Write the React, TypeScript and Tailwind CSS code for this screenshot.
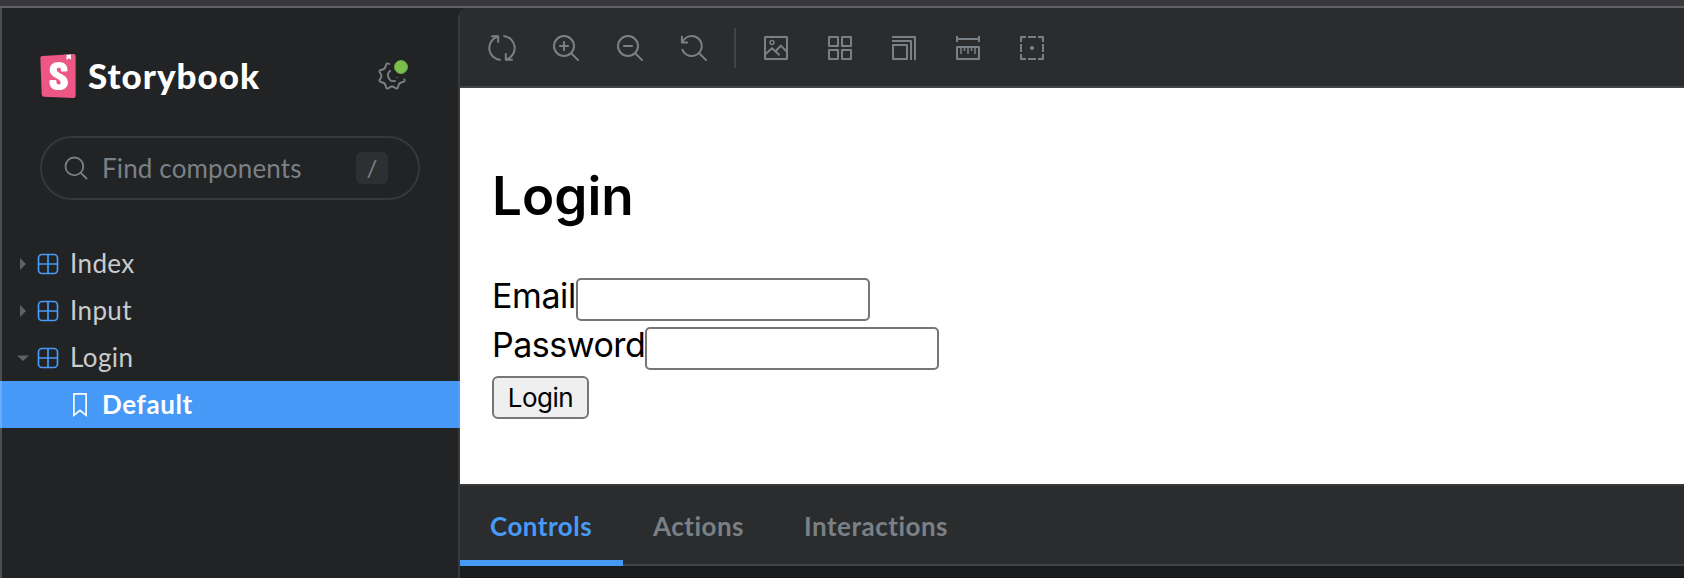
import React from "react";
import { SiStorybook } from "react-icons/si";

const Icon = ({ children }: { children: React.ReactNode }) => (
  <svg
    className="w-7 h-7 shrink-0"
    viewBox="0 0 28 28"
    fill="none"
    stroke="currentColor"
    strokeWidth="2"
    strokeLinejoin="round"
  >
    {children}
  </svg>
);

const Logo = () => (
  <div className="flex items-center">
    <div className="relative w-11 h-11 -ml-1">
      <svg className="absolute inset-0" viewBox="0 0 24 24" fill="#fff">
        <path d="M5 2 16 .4 19.4.2V20H5z" />
      </svg>
      <SiStorybook className="relative w-11 h-11 text-[#ed5685]" />
    </div>
    <div className="ml-2 pb-0.5 font-black text-[35px] leading-none tracking-[1px] text-white">
      Storybook
    </div>
  </div>
);

const Settings = () => (
  <div className="relative w-7 h-7 text-[#798186]">
    <svg
      className="w-7 h-7"
      viewBox="0 0 28 28"
      fill="none"
      stroke="currentColor"
      strokeWidth="1.9"
      strokeLinecap="round"
      strokeLinejoin="round"
    >
      <path d="M11.2 2Q8.3.1 7.8 3.7 7.3 7.3 3.7 7.8.1 8.3 2.3 11.2 4.5 14 2.3 16.9.1 19.7 3.7 20.2 7.3 20.7 7.8 24.3 8.3 27.9 11.2 25.7 14 23.5 16.9 25.7 19.7 27.9 20.2 24.3 20.7 20.7 24.3 20.2 27.4 19.8 26.4 17.4" />
      <path d="M12.2 8.8a5.8 5.8 0 0 0 4.8 10.2" />
      <path d="M19 15.6h.2" strokeWidth="1.4" />
    </svg>
    <span className="absolute -top-[2px] -right-[2px] w-3.5 h-3.5 rounded-full bg-[#7abf4c] border border-[#6aa843]" />
  </div>
);

const Search = () => (
  <div className="mt-[38px] h-16 rounded-full border-2 border-[#373839] flex items-center pl-[22px] pr-[30px] text-[#798186]">
    <svg
      className="w-6 h-6"
      viewBox="0 0 24 24"
      fill="none"
      stroke="currentColor"
      strokeWidth="1.8"
    >
      <circle cx="10.4" cy="10.4" r="8.9" />
      <path d="m16.8 16.8 6.2 6.2" />
    </svg>
    <div className="ml-3.5 text-[26px] tracking-[0.15px]">
      Find components
    </div>
    <div className="ml-auto w-8 h-8 rounded-md bg-[#2e2f31] flex items-center justify-center text-2xl">
      /
    </div>
  </div>
);

const Item = ({ name, open }: { name: string; open?: boolean }) => (
  <div className="h-[47px] flex items-center pl-[13px] text-[#c9cccf]">
    <svg className="w-4 h-4 text-[#5c6365]" viewBox="0 0 16 16" fill="currentColor">
      {open ? <path d="M2 5.5h12L8 11z" /> : <path d="M5 2v12l6-6z" />}
    </svg>
    <svg
      className="w-6 h-6 ml-[5px] text-[#479af7]"
      viewBox="0 0 24 24"
      fill="none"
      stroke="currentColor"
      strokeWidth="1.7"
    >
      <rect x="2.5" y="2.5" width="19" height="19" rx="3.5" />
      <path d="M12 2.5v19M2.5 12h19" />
    </svg>
    <div className="ml-2.5 text-[26px] tracking-[0.4px]">{name}</div>
  </div>
);

const Sidebar = () => (
  <div className="w-[458px] shrink-0 border-l-2 border-[#4d4e50]">
    <div className="pt-[46px] px-[38px]">
      <div className="flex items-center justify-between pr-3.5">
        <Logo />
        <Settings />
      </div>
      <Search />
    </div>
    <div className="mt-10">
      <Item name="Index" />
      <Item name="Input" />
      <Item name="Login" open />
      <div className="relative h-[47px] -mr-0.5 -ml-0.5 border-x-2 border-l-[#68adf8] border-r-[#549ff5] bg-[#4699f6] flex items-center pl-[71px] text-white">
        <svg
          className="w-3.5 h-6"
          viewBox="0 0 14 24"
          fill="none"
          stroke="currentColor"
          strokeWidth="1.6"
        >
          <path d="M.9.9h12.2v21.4L7 17.4.9 22.3z" />
        </svg>
        <div className="ml-[15px] text-[26px] font-bold tracking-[0.6px]">
          Default
        </div>
      </div>
    </div>
  </div>
);

const Toolbar = () => (
  <div className="h-20 shrink-0 border-b-2 border-[#424344] bg-[#2b2c2e] rounded-tl-lg flex items-center pt-0.5 pl-7 gap-9 text-[#798186]">
    <Icon>
      <path d="M3.2 2.2h7v6.6M9.6 2.6A12 12 0 0 0 12.6 26M24.8 25.8h-7v-6.6M18.4 25.4A12 12 0 0 0 15.4 2" />
    </Icon>
    <Icon>
      <circle cx="12" cy="12" r="10" />
      <path d="m19 19 7.6 7.6M12 7.2v9.6M7.2 12h9.6" />
    </Icon>
    <Icon>
      <circle cx="12" cy="12" r="10" />
      <path d="m19 19 7.6 7.6M7.2 12h9.6" />
    </Icon>
    <Icon>
      <path d="M1.9 2v6.4h6M2.4 8.4a10 10 0 1 1-.2 6.6M19 19l7.6 7.6" />
    </Icon>
    <div className="w-0.5 h-10 -mx-2.5 bg-[#424344]" />
    <Icon>
      <rect x="3" y="3" width="22" height="22" rx="0.5" />
      <circle cx="10" cy="8.6" r="2" strokeWidth="1.5" />
      <path d="m3 20.6 7-6.4 7.6 7M13.8 17l5-5.4 6.2 6.2" />
    </Icon>
    <Icon>
      <rect x="3" y="3" width="9" height="9" />
      <rect x="16" y="3" width="9" height="9" />
      <rect x="3" y="16" width="9" height="9" />
      <rect x="16" y="16" width="9" height="9" />
    </Icon>
    <Icon>
      <rect x="3" y="11" width="14" height="14" />
      <path d="M2 7h19v19M2 3h23v23" />
    </Icon>
    <Icon>
      <path d="M3 2v6M25 2v6M3 5h22" />
      <rect x="3" y="13" width="22" height="12" />
      <path d="M7 13v7M14 13v7M21 13v7M10.5 13v4M17.5 13v4" strokeWidth="1.6" />
    </Icon>
    <Icon>
      <path d="M3 8V3h5M10 3h8M20 3h5v5M25 10v8M25 20v5h-5M18 25h-8M8 25H3v-5M3 18v-8" />
      <circle cx="14" cy="14" r="2" fill="currentColor" stroke="none" />
    </Icon>
  </div>
);

const Preview = () => (
  <div className="h-[396px] shrink-0 bg-white pl-8 text-black font-[Inter,'Liberation_Sans',sans-serif]">
    <h1 className="pt-[76px] text-[53px] leading-[64px] font-semibold">
      Login
    </h1>
    <div className="mt-[47px] h-[49px] flex items-start text-[34px] leading-[42px]">
      <label className="w-[84px] tracking-[-0.4px]">Email</label>
      <input className="mt-[3px] w-[294px] h-[43px] border-2 border-[#767676] rounded-[5px]" />
    </div>
    <div className="h-[49px] flex items-start text-[34px] leading-[42px]">
      <label className="w-[153px] tracking-[-0.5px]">Password</label>
      <input className="mt-[3px] w-[294px] h-[43px] border-2 border-[#767676] rounded-[5px]" />
    </div>
    <button className="mt-[3px] w-[97px] h-[43px] pb-px border-2 border-[#767676] rounded-[6px] bg-[#efefef] text-[26px] leading-[37px] tracking-[-0.5px]">
      Login
    </button>
  </div>
);

const Addons = () => (
  <div className="grow border-t-2 border-[#38393b] bg-[#1b1c1e] border-b border-b-[#1e1418]">
    <div className="h-20 bg-[#2b2c2e] border-b-2 border-[#424344] flex text-[26px] leading-[80px] font-bold tracking-[0.5px] text-[#798186]">
      <div className="h-20 w-[163px] shrink-0 pl-[30px] border-b-[6px] border-[#4699f6] text-[#479af7]">
        Controls
      </div>
      <div className="w-[151px] shrink-0 pl-[30px]">Actions</div>
      <div className="pl-[30px]">Interactions</div>
    </div>
  </div>
);

const App = () => {
  return (
    <div className="w-full h-[578px] overflow-hidden flex flex-col bg-[#222325] font-[Lato,'Open_Sans',sans-serif]">
      <div className="h-2 shrink-0 bg-[#37373d] border-b-2 border-[#616163]" />
      <div className="grow flex">
        <Sidebar />
        <div className="grow flex flex-col border-l-2 border-[#38393b] rounded-tl-[10px]">
          <Toolbar />
          <Preview />
          <Addons />
        </div>
      </div>
    </div>
  );
};

export default App;
